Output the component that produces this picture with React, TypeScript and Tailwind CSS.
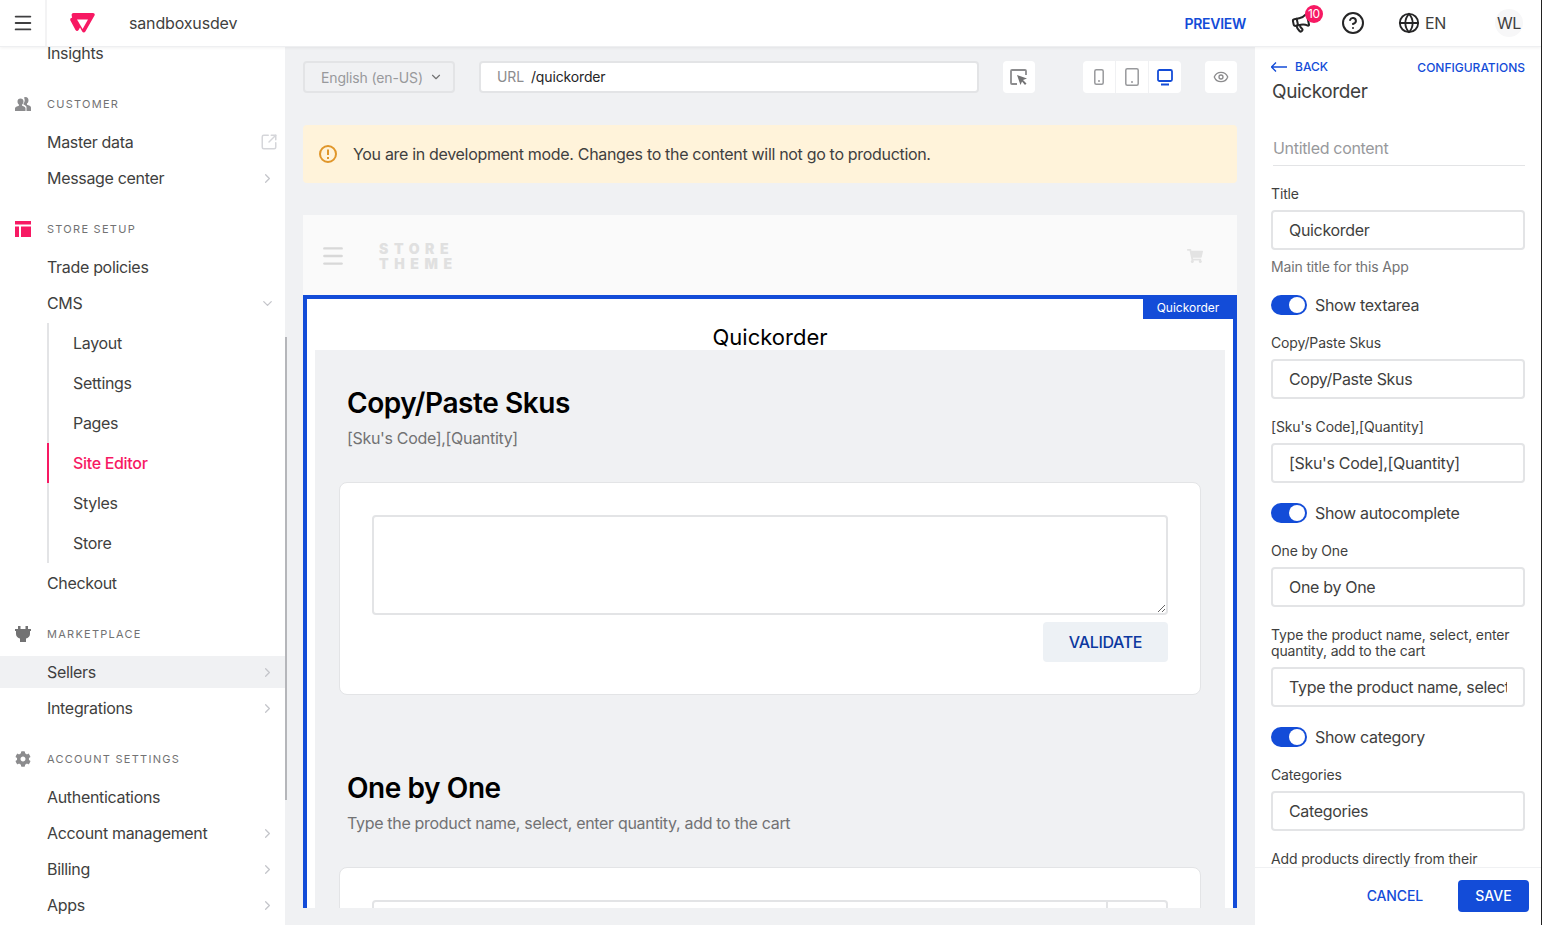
import {
  ChevronDown,
  ChevronRight,
  CircleHelp,
  Eye,
  Globe,
  Megaphone,
  Menu,
  SquareArrowOutUpRight,
} from 'lucide-react';
import { FaCog, FaShoppingCart } from 'react-icons/fa';

const font = "font-['Inter',sans-serif]";

const SectionTitle = ({ icon, label }: { icon: React.ReactNode; label: string }) => (
  <div className="flex h-5 items-center">
    <span className="flex w-[47px] shrink-0 pl-[15px]">{icon}</span>
    <span className="text-[11px] tracking-[0.115em] text-[#727273] uppercase">{label}</span>
  </div>
);

const NavItem = ({
  label,
  arrow,
  active,
}: {
  label: string;
  arrow?: 'right' | 'down' | 'external';
  active?: boolean;
}) => (
  <div className={`flex h-8 items-center pl-[47px] pr-[10px] text-[16px] text-[#3f3f40] ${active ? 'bg-[#f0f1f3]' : ''}`}>
    <span className="flex-1">{label}</span>
    {arrow === 'right' && <ChevronRight size={15} className="text-[#c4c5ca]" />}
    {arrow === 'down' && <ChevronDown size={15} className="text-[#c4c5ca]" />}
    {arrow === 'external' && <SquareArrowOutUpRight size={18} className="-mr-[3px] text-[#d5d6da]" />}
  </div>
);

const SubItem = ({ label, active }: { label: string; active?: boolean }) => (
  <div
    className={`flex h-10 items-center border-l-2 pl-6 text-[16px] ${
      active ? 'border-[#f71963] font-medium text-[#f71963]' : 'border-[#e3e4e6] text-[#3f3f40]'
    }`}
  >
    {label}
  </div>
);

const Sidebar = () => (
  <aside className="flex h-full w-[287px] shrink-0">
    <div className="w-[285px] overflow-hidden bg-white">
      <div className="-mt-[10px]">
        <NavItem label="Insights" />
      </div>

      <div className="mt-[25px]">
        <SectionTitle
          icon={
            <svg width="16" height="16" viewBox="0 0 16 16" fill="#8c8c8e">
              <path d="M10.500 1c1.900 0 3 1.400 3 3.300 0 1.400-.6 2.700-1.500 3.300v1.200c1.800.5 4 1.300 4 2.700V15h-4.500v-3.800c0-1-1.400-2-3-2.600V7.400c.8-.8 1.200-2 1.200-3.100 0-1-.3-2-.8-2.700.5-.4 1.100-.6 1.600-.6z" />
              <path d="M5.500 2.500c1.900 0 3 1.300 3 3 0 1.300-.6 2.500-1.400 3.100v1.100c1.800.5 3.400 1.300 3.400 2.500V15H0v-2.800c0-1.200 2-2 3.900-2.500V8.600C3 8 2.500 6.800 2.500 5.500c0-1.700 1.100-3 3-3z" />
            </svg>
          }
          label="Customer"
        />
        <div className="mt-3 flex flex-col gap-1">
          <NavItem label="Master data" arrow="external" />
          <NavItem label="Message center" arrow="right" />
        </div>
      </div>

      <div className="mt-[25px]">
        <SectionTitle
          icon={
            <svg width="16" height="16" viewBox="0 0 16 16" fill="#f71963">
              <rect x="0" y="0" width="16" height="3.500" />
              <rect x="0" y="5.500" width="4" height="10.500" />
              <rect x="6" y="5.500" width="10" height="10.500" />
            </svg>
          }
          label="Store Setup"
        />
        <div className="mt-3 flex flex-col gap-1">
          <NavItem label="Trade policies" />
          <NavItem label="CMS" arrow="down" />
          <div className="ml-[47px] flex flex-col">
            <SubItem label="Layout" />
            <SubItem label="Settings" />
            <SubItem label="Pages" />
            <SubItem label="Site Editor" active />
            <SubItem label="Styles" />
            <SubItem label="Store" />
          </div>
          <NavItem label="Checkout" />
        </div>
      </div>

      <div className="mt-[25px]">
        <SectionTitle
          icon={
            <svg width="16" height="16" viewBox="0 0 16 16" fill="#727273">
              <path d="M3 0h2.500v3h5V0H13v3h3v2h-1v3c0 2.500-2 4-4 4.400V16H5v-3.600C3 12 1 10.500 1 8V5H0V3h3z" />
            </svg>
          }
          label="Marketplace"
        />
        <div className="mt-3 flex flex-col gap-1">
          <NavItem label="Sellers" arrow="right" active />
          <NavItem label="Integrations" arrow="right" />
        </div>
      </div>

      <div className="mt-[25px]">
        <SectionTitle icon={<FaCog size={16} className="text-[#8c8c8e]" />} label="Account Settings" />
        <div className="mt-3 flex flex-col gap-1">
          <NavItem label="Authentications" />
          <NavItem label="Account management" arrow="right" />
          <NavItem label="Billing" arrow="right" />
          <NavItem label="Apps" arrow="right" />
        </div>
      </div>
    </div>
    <div className="mt-[290px] h-[463px] w-[2px] bg-[#b5b6ba]" />
  </aside>
);

const Header = () => (
  <header className="relative z-10 flex h-[47px] shrink-0 items-center border-b border-[#eeeff1] bg-white shadow-[0_1px_3px_rgba(0,0,0,0.06)]">
    <div className="flex h-full w-[47px] items-center justify-center border-r-2 border-[#f3f3f4]">
      <Menu size={22} className="text-[#3f3f40]" />
    </div>
    <svg width="25" height="20" viewBox="0 0 25 20" className="ml-[23px]">
      <path
        d="M3.500 0H23c1.400 0 2.200 1.400 1.500 2.600L15.400 18.600c-.7 1.300-2.500 1.300-3.200 0L10 14.400 8.600 17c-.7 1.200-2.400 1.200-3.100 0L.4 7.600C-.2 6.300.6 4.700 2 4.700h.1L1.700 2.500C1.300 1.200 2.200 0 3.500 0z"
        fill="#f71963"
      />
      <path d="M7 6.500h11l-5.400 9.400z" fill="#fff" />
    </svg>
    <span className="ml-[34px] text-[16px] tracking-[-0.01em] text-[#3f3f40]">sandboxusdev</span>
    <div className="ml-auto flex items-center pr-[18px]">
      <span className="text-[14px] font-semibold tracking-[-0.02em] text-[#134cd8]">PREVIEW</span>
      <div className="relative ml-[45px]">
        <Megaphone size={20} strokeWidth={2.4} className="-rotate-12 text-[#252526]" />
        <span className="absolute -top-[8px] left-[14px] flex h-[18px] w-[18px] items-center justify-center rounded-full bg-[#f71963] text-[12px] text-white">
          10
        </span>
      </div>
      <CircleHelp size={24} className="ml-[30px] text-[#252526]" />
      <Globe size={22} className="ml-[33px] text-[#252526]" />
      <span className="ml-[5px] text-[16px] text-[#3f3f40]">EN</span>
      <span className="ml-[49px] flex h-7 w-7 items-center justify-center rounded-full bg-[#f7f7f8] text-[16px] text-[#3f3f40]">
        WL
      </span>
    </div>
  </header>
);

const ToolButton = ({ children, className = 'w-8' }: { children: React.ReactNode; className?: string }) => (
  <div className={`flex h-8 items-center justify-center bg-white ${className}`}>{children}</div>
);

const Toolbar = () => (
  <div className="flex items-center">
    <div className="flex h-8 w-[152px] items-center rounded border-2 border-[#e3e4e6] pl-4 text-[14px] tracking-[-0.01em] text-[#98999c]">
      English (en-US)
      <ChevronDown size={14} className="ml-[6px] text-[#727273]" />
    </div>
    <div className="ml-6 flex h-8 w-[500px] items-center rounded border-2 border-[#e3e4e6] bg-white pb-[1px] pl-4 text-[14px] tracking-[-0.01em]">
      <span className="text-[#8c8c8e]">URL</span>
      <span className="ml-[7px] text-[#252526]">/quickorder</span>
    </div>
    <ToolButton className="ml-6 w-8 rounded">
      <svg width="18" height="18" viewBox="0 0 18 18" fill="none">
        <path d="M7 16H2a1 1 0 0 1-1-1V3a1 1 0 0 1 1-1h13a1 1 0 0 1 1 1v4" stroke="#8c8c8e" strokeWidth="1.800" />
        <path d="M7 7l10 3.500-4 1.500 3.500 3.500-1.500 1.500L12 13.500 10.500 17z" fill="#727273" />
      </svg>
    </ToolButton>
    <div className="ml-12 flex overflow-hidden rounded">
      <ToolButton className="w-[33px] border-r border-[#f0f1f3]">
        <svg width="10" height="16" viewBox="0 0 10 16" fill="none">
          <rect x="0.800" y="0.800" width="8.400" height="14.400" rx="1.500" stroke="#98999c" strokeWidth="1.500" />
          <circle cx="5" cy="12" r="1" fill="#98999c" />
        </svg>
      </ToolButton>
      <ToolButton className="w-[33px] border-r border-[#f0f1f3]">
        <svg width="14" height="18" viewBox="0 0 14 18" fill="none">
          <rect x="0.800" y="0.800" width="12.400" height="16.400" rx="1.500" stroke="#98999c" strokeWidth="1.500" />
          <circle cx="7" cy="14" r="1" fill="#98999c" />
        </svg>
      </ToolButton>
      <ToolButton>
        <svg width="16" height="17" viewBox="0 0 16 17" fill="none">
          <rect x="1" y="1" width="14" height="11" rx="1.500" stroke="#134cd8" strokeWidth="1.800" />
          <path d="M4 15.500h8" stroke="#134cd8" strokeWidth="1.800" />
        </svg>
      </ToolButton>
    </div>
    <ToolButton className="ml-6 w-8 rounded">
      <Eye size={16} className="text-[#8c8c8e]" />
    </ToolButton>
  </div>
);

const Preview = () => (
  <div className="flex min-h-0 flex-1 flex-col overflow-hidden">
    <div className="flex h-20 shrink-0 items-center bg-[#fafafa] pl-[17px] pr-[34px] pt-[2px]">
      <Menu size={26} strokeWidth={2.2} className="text-[#d8d8d8]" />
      <div className="ml-[33px] text-[14px] leading-[15px] font-black tracking-[0.4em] text-[#e0e0e0]">
        <div>STORE</div>
        <div>THEME</div>
      </div>
      <FaShoppingCart size={16} className="ml-auto text-[#e3e3e3]" />
    </div>

    <div className="relative flex min-h-0 flex-1 flex-col overflow-hidden border-4 border-b-0 border-[#134cd8] bg-white px-2">
      <span className="absolute top-0 right-0 flex h-5 w-[90px] items-center justify-center bg-[#134cd8] pb-[2px] text-[12px] tracking-normal text-white">
        Quickorder
      </span>
      <h1 className="mt-[25px] h-[26px] text-center text-[22px] leading-[27px] tracking-normal text-black">Quickorder</h1>
      <div className="min-h-0 flex-1 overflow-hidden bg-[#f0f1f3] px-6 pt-[34px]">
        <h2 className="ml-2 text-[28px] leading-[38px] font-semibold tracking-[-0.015em] text-black">Copy/Paste Skus</h2>
        <p className="ml-2 mt-[4px] text-[16px] leading-6 text-[#727273]">[Sku's Code],[Quantity]</p>
        <div className="mt-[32px] h-[213px] rounded-lg border border-[#e3e4e6] bg-white px-8 pt-8">
          <textarea
            readOnly
            className="block h-[100px] w-full resize-y rounded border-2 border-[#e3e4e6] bg-white outline-none"
          />
          <div className="mt-[7px] flex justify-end">
            <button className="h-10 w-[125px] rounded bg-[#edf1f5] text-[16px] font-medium text-[#0c389f]">
              VALIDATE
            </button>
          </div>
        </div>
        <h2 className="ml-2 mt-[74px] text-[28px] leading-[38px] font-semibold tracking-[-0.015em] text-black">One by One</h2>
        <p className="ml-2 mt-[4px] text-[16px] leading-6 text-[#727273]">
          Type the product name, select, enter quantity, add to the cart
        </p>
        <div className="mt-[32px] h-[120px] rounded-lg border border-[#e3e4e6] bg-white px-8 pt-8">
          <div className="flex h-12 rounded border-2 border-[#e3e4e6]">
            <div className="flex-1" />
            <div className="w-[60px] border-l-2 border-[#e3e4e6]" />
          </div>
        </div>
      </div>
    </div>
  </div>
);

const Label = ({ children, className = '' }: { children: React.ReactNode; className?: string }) => (
  <div className={`text-[14px] leading-4 tracking-[-0.01em] text-[#3f3f40] ${className}`}>{children}</div>
);

const Field = ({ value, className = '' }: { value: string; className?: string }) => (
  <input
    readOnly
    value={value}
    className={`block h-10 w-full rounded border-2 border-[#e3e4e6] bg-white px-4 text-[16px] text-[#3f3f40] outline-none ${className}`}
  />
);

const Toggle = ({ label, className = '' }: { label: string; className?: string }) => (
  <div className={`flex h-5 items-center ${className}`}>
    <div className="flex h-5 w-9 items-center justify-end rounded-full bg-[#134cd8] pr-[2px]">
      <div className="h-4 w-4 rounded-full bg-white" />
    </div>
    <span className="ml-2 text-[16px] text-[#3f3f40]">{label}</span>
  </div>
);

const SidePanel = () => (
  <aside className="flex h-full w-[286px] shrink-0 flex-col bg-white">
    <div className="min-h-0 flex-1 overflow-hidden px-4">
      <div className="mt-[12px] flex h-4 items-center justify-between tracking-normal">
        <div className="flex items-center text-[12px] font-medium text-[#134cd8]">
          <svg width="16" height="10" viewBox="0 0 16 10" fill="none" stroke="#134cd8" strokeWidth="1.300">
            <path d="M0.500 5H16M5 0.500 0.500 5 5 9.500" />
          </svg>
          <span className="ml-2">BACK</span>
        </div>
        <span className="mt-[2px] text-[12px] font-medium text-[#134cd8]">CONFIGURATIONS</span>
      </div>
      <div className="mt-[3px] ml-[1px] text-[19px] leading-[28px] tracking-[-0.02em] text-[#3f3f40]">Quickorder</div>

      <div className="mt-[30px] ml-[2px] h-[30px] border-b border-[#e3e4e6] text-[16px] leading-6 text-[#98999c]">
        Untitled content
      </div>

      <Label className="mt-[20px]">Title</Label>
      <Field value="Quickorder" className="mt-2" />
      <div className="mt-[9px] text-[14px] leading-4 tracking-[-0.01em] text-[#727273]">Main title for this App</div>

      <Toggle label="Show textarea" className="mt-[20px]" />
      <Label className="mt-[20px]">Copy/Paste Skus</Label>
      <Field value="Copy/Paste Skus" className="mt-2" />
      <Label className="mt-5">[Sku's Code],[Quantity]</Label>
      <Field value="[Sku's Code],[Quantity]" className="mt-2" />

      <Toggle label="Show autocomplete" className="mt-5" />
      <Label className="mt-[20px]">One by One</Label>
      <Field value="One by One" className="mt-2" />
      <Label className="mt-[20px]">Type the product name, select, enter quantity, add to the cart</Label>
      <Field value="Type the product name, select, enter quantity, add to the cart" className="mt-2" />

      <Toggle label="Show category" className="mt-5" />
      <Label className="mt-[20px]">Categories</Label>
      <Field value="Categories" className="mt-2" />
      <Label className="mt-[20px]">Add products directly from their</Label>
    </div>
    <div className="flex h-[58px] shrink-0 items-center justify-end border-t border-[#f0f1f3] pb-[2px] pr-3 tracking-normal">
      <span className="text-[14px] font-medium tracking-[-0.01em] text-[#134cd8]">CANCEL</span>
      <button className="ml-[35px] h-8 w-[71px] rounded bg-[#134cd8] text-[14px] font-medium text-white">SAVE</button>
    </div>
  </aside>
);

const App = () => {
  return (
    <div className={`flex h-screen w-full flex-col overflow-hidden border-r border-[#222222] bg-[#f0f1f3] tracking-[-0.02em] ${font}`}>
      <Header />
      <div className="flex min-h-0 flex-1">
        <Sidebar />
        <main className="flex min-w-0 flex-1 flex-col pb-[17px] pl-4 pr-[18px] pt-[14px]">
          <Toolbar />
          <div className="mt-8 flex h-[58px] shrink-0 items-center rounded bg-[#fff3da] pl-4 text-[16px] text-[#3f3f40]">
            <svg width="18" height="18" viewBox="0 0 18 18" fill="none">
              <circle cx="9" cy="9" r="8" stroke="#e0962a" strokeWidth="2" />
              <path d="M9 4.500v5.500M9 12v2" stroke="#e0962a" strokeWidth="2" />
            </svg>
            <span className="ml-4">You are in development mode. Changes to the content will not go to production.</span>
          </div>
          <div className="mt-8 flex min-h-0 flex-1 flex-col">
            <Preview />
          </div>
        </main>
        <SidePanel />
      </div>
    </div>
  );
};

export default App;
